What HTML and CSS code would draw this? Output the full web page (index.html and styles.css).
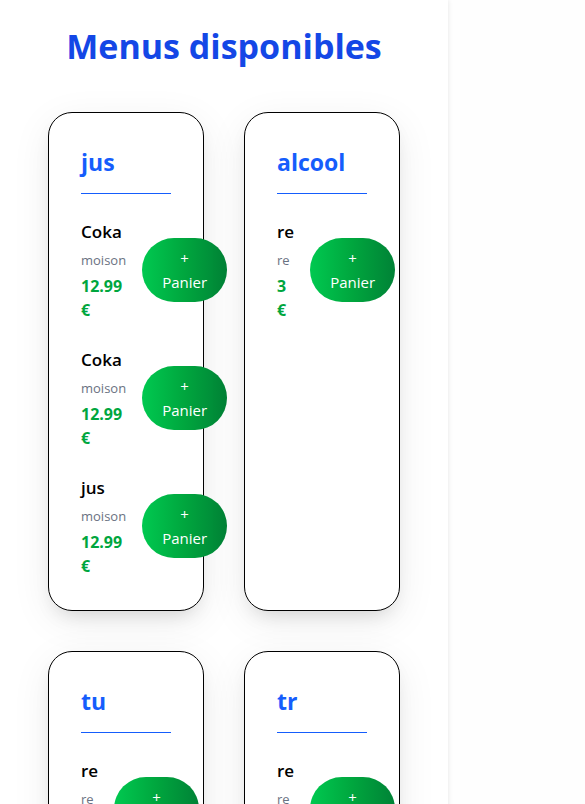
FILE: index.html
```html
<!DOCTYPE html>
<html lang="fr">
<head>
<meta charset="utf-8">
<meta name="viewport" content="width=device-width, initial-scale=1">
<title>Menus disponibles</title>
<link rel="stylesheet" href="styles.css">
</head>
<body>
<div class="layout">
  <main class="menus">
    <h1 class="page-title">Menus disponibles</h1>
    <div class="menu-grid">
      <section class="card">
        <h2 class="card-title">jus</h2>
        <ul class="items">
          <li class="item">
            <div class="info">
              <h3 class="name">Coka</h3>
              <p class="desc">moison</p>
              <p class="price">12.99 €</p>
            </div>
            <button class="add" type="button">+ Panier</button>
          </li>
          <li class="item">
            <div class="info">
              <h3 class="name">Coka</h3>
              <p class="desc">moison</p>
              <p class="price">12.99 €</p>
            </div>
            <button class="add" type="button">+ Panier</button>
          </li>
          <li class="item">
            <div class="info">
              <h3 class="name">jus</h3>
              <p class="desc">moison</p>
              <p class="price">12.99 €</p>
            </div>
            <button class="add" type="button">+ Panier</button>
          </li>
        </ul>
      </section>
      <section class="card">
        <h2 class="card-title">alcool</h2>
        <ul class="items">
          <li class="item">
            <div class="info">
              <h3 class="name">re</h3>
              <p class="desc">re</p>
              <p class="price">3 €</p>
            </div>
            <button class="add" type="button">+ Panier</button>
          </li>
        </ul>
      </section>
      <section class="card">
        <h2 class="card-title">tu</h2>
        <ul class="items">
          <li class="item">
            <div class="info">
              <h3 class="name">re</h3>
              <p class="desc">re</p>
            </div>
            <button class="add" type="button">+ Panier</button>
          </li>
        </ul>
      </section>
      <section class="card">
        <h2 class="card-title">tr</h2>
        <ul class="items">
          <li class="item">
            <div class="info">
              <h3 class="name">re</h3>
              <p class="desc">re</p>
            </div>
            <button class="add" type="button">+ Panier</button>
          </li>
        </ul>
      </section>
    </div>
  </main>
</div>
</body>
</html>
```
FILE: styles.css
```css
* {
  box-sizing: border-box;
  margin: 0;
  padding: 0;
}

body {
  background: #fefefe;
  color: #000;
  font-family: "Segoe UI", "Open Sans", "Noto Sans", sans-serif;
  font-size: 16px;
  line-height: 24px;
}

.layout {
  display: grid;
  grid-template-columns: minmax(0, 1fr) 137px;
  height: 100vh;
  overflow: hidden;
}

.menus {
  padding: 24px 48px 48px;
  background: #fff;
  box-shadow: 0 0 5px rgba(0, 0, 0, 0.1);
}

.page-title {
  margin-bottom: 44px;
  color: #1447e6;
  font-size: 34px;
  font-weight: 700;
  line-height: 44px;
  text-align: center;
}

.menu-grid {
  display: grid;
  grid-template-columns: repeat(2, minmax(0, 1fr));
  gap: 40px;
}

.card {
  padding: 32px;
  border: 1px solid #000;
  border-radius: 24px;
  background: #fff;
  box-shadow: 0 10px 40px rgba(0, 0, 0, 0.07), 0 10px 20px -8px rgba(0, 0, 0, 0.15);
}

.card-title {
  margin-bottom: 24px;
  padding-bottom: 14px;
  border-bottom: 1px solid #155dfc;
  color: #155dfc;
  font-size: 23px;
  font-weight: 700;
  line-height: 34px;
}

.items {
  display: grid;
  gap: 24px;
  list-style: none;
}

.item {
  display: flex;
  align-items: center;
  justify-content: space-between;
  gap: 16px;
  min-height: 104px;
}

.info {
  display: grid;
  align-content: start;
  align-self: stretch;
  gap: 4px;
}

.name {
  font-size: 17px;
  font-weight: 600;
  line-height: 28px;
}

.desc {
  color: #6a7282;
  font-size: 13px;
  line-height: 20px;
}

.price {
  color: #00a63e;
  font-weight: 700;
}

.add {
  padding: 8px 20px;
  border: 0;
  border-radius: 32px;
  background: linear-gradient(to right, #00c950, #00a63e, #008236);
  color: #fff;
  font: inherit;
  font-size: 15px;
  cursor: pointer;
}
```
